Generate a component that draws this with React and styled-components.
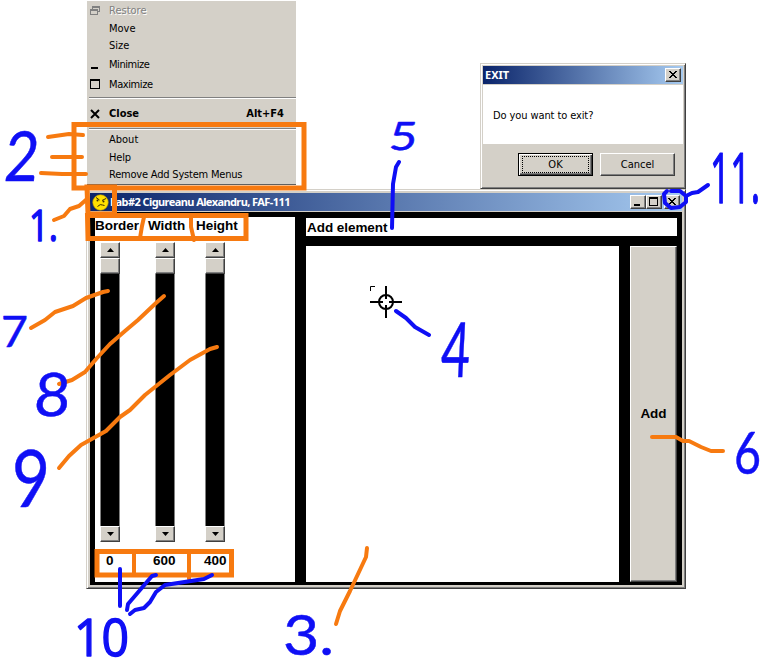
import React from "react";
import styled, { createGlobalStyle } from "styled-components";

const face = "#d4d0c8";
const orange = "#f77a10";
const blue = "#0f0ff5";
const ui = `"DejaVu Sans Condensed", "DejaVu Sans", sans-serif`;

const Global = createGlobalStyle`
  * { box-sizing: border-box; }
  html, body { margin: 0; background: #fff; }
`;

const Desktop = styled.main`
  position: relative;
  width: 761px;
  height: 660px;
  overflow: hidden;
  background: #fff;
  color: #000;
  font: 11px/14px ${ui};
`;

const SystemMenu = styled.ul`
  position: absolute;
  left: 87px;
  top: 1px;
  width: 209px;
  height: 184px;
  margin: 0;
  padding: 0;
  list-style: none;
  background: ${face};
  border-bottom: 1px solid #606060;
`;

const MenuItem = styled.li`
  display: grid;
  grid-template-columns: 22px 1fr auto;
  align-items: center;
  height: ${(p) => p.$h}px;
  padding-right: 12px;
  white-space: nowrap;
  font-weight: ${(p) => (p.$bold ? 700 : 400)};
  letter-spacing: ${(p) => p.$ls || 0}px;
  color: ${(p) => (p.$disabled ? "#808080" : "#000")};
  text-shadow: ${(p) => (p.$disabled ? "1px 1px 0 #fff" : "none")};
`;

const MenuIcon = styled.svg`
  display: block;
  width: 12px;
  height: 12px;
  margin-left: 2px;
`;

const MenuRule = styled.li`
  height: 2px;
  margin: ${(p) => p.$m};
  border-top: 1px solid #808080;
  border-bottom: 1px solid #fff;
`;

const Frame = styled.section`
  position: absolute;
  left: ${(p) => p.$x}px;
  top: ${(p) => p.$y}px;
  width: ${(p) => p.$w}px;
  height: ${(p) => p.$h}px;
  display: flex;
  flex-direction: column;
  padding: ${(p) => p.$pad};
  background: ${face};
  border: 1px solid;
  border-color: ${face} #404040 #404040 ${face};
  box-shadow: inset 1px 1px #fff, inset -1px -1px #808080;
`;

const TitleBar = styled.header`
  display: flex;
  align-items: center;
  flex: none;
  height: 18px;
  padding: 0 2px;
  background: linear-gradient(90deg, #0a246a, #a6caf0);
  color: #fff;
`;

const Title = styled.h1`
  flex: 1;
  margin: 0 0 0 ${(p) => p.$ml || 0}px;
  font: bold 11px/16px "Noto Sans", sans-serif;
  white-space: nowrap;
  letter-spacing: ${(p) => p.$ls || 0}px;
`;

const raised = `
  background: ${face};
  border: 1px solid;
  border-color: #fff #404040 #404040 #fff;
  box-shadow: inset -1px -1px #808080;
`;

const CaptionButton = styled.button`
  ${raised}
  display: block;
  width: 16px;
  height: 14px;
  margin-left: ${(p) => p.$gap || 0}px;
  padding: 0;
`;

const CaptionIcon = styled.svg`
  display: block;
  width: 14px;
  height: 12px;
`;

const DialogBody = styled.p`
  height: 59px;
  margin: 1px 0 0;
  padding: 24px 0 0 10px;
  background: #fff;
  letter-spacing: -0.1px;
`;

const DialogActions = styled.div`
  display: flex;
  justify-content: flex-end;
  gap: 7px;
  padding: 9px 8px 0 0;
`;

const DialogButton = styled.button`
  ${raised}
  width: 75px;
  height: 23px;
  padding: 2px;
  font: 11px/15px ${ui};
  color: #000;
  ${(p) =>
    p.$default &&
    `border-color: #000; box-shadow: inset 1px 1px #fff, inset -1px -1px #404040, inset -2px -2px #808080;`}
`;

const FocusRing = styled.span`
  display: block;
  height: 17px;
  margin: 0 1px;
  border: 1px dotted ${(p) => (p.$on ? "#000" : "transparent")};
`;

const Client = styled.div`
  flex: 1;
  display: grid;
  grid-template-columns: 200px 371px;
  gap: 11px;
  margin-top: 1px;
  padding: 5px 5px 3px;
  background: #000;
  font: bold 13.5px/16px "Liberation Sans", sans-serif;
`;

const Sliders = styled.div`
  display: flex;
  background: #fff;
`;

const Channel = styled.div`
  display: flex;
  flex-direction: column;
  width: ${(p) => p.$w}px;
`;

const ChannelLabel = styled.span`
  height: 25px;
  margin-left: ${(p) => p.$start}px;
  padding-top: 1px;
  white-space: nowrap;
  letter-spacing: -0.05px;
`;

const ChannelValue = styled.span`
  margin-top: 11px;
  padding-left: ${(p) => p.$pad}px;
`;

const ScrollBar = styled.div`
  display: flex;
  flex-direction: column;
  width: 20px;
  height: 300px;
  margin-left: 5px;
  background: #000;
  border: solid #808080;
  border-width: 0 1px;
`;

const ScrollButton = styled.span`
  ${raised}
  display: flex;
  align-items: center;
  justify-content: center;
  height: 16px;
  margin: 0 -1px;
`;

const Arrow = styled.svg`
  display: block;
  width: 7px;
  height: 4px;
  transform: ${(p) => (p.$down ? "rotate(180deg)" : "none")};
`;

const Track = styled.div`
  flex: 1;
`;

const Editor = styled.div`
  display: grid;
  grid-template: 18px 336px / 313px 47px;
  gap: 10px 11px;
  padding-top: 1px;
`;

const Heading = styled.div`
  grid-column: 1 / -1;
  padding-left: 1px;
  background: #fff;
  line-height: 19px;
  letter-spacing: -0.05px;
`;

const Canvas = styled.div`
  background: #fff;
  padding: 40px 0 0 64px;
`;

const Cross = styled.svg`
  display: block;
  width: 33px;
  height: 33px;
`;

const AddButton = styled.button`
  ${raised}
  padding: 0;
  color: #000;
  font: inherit;
`;

const Face = styled.svg`
  display: block;
  width: 17px;
  height: 17px;
`;

const Ink = styled.svg`
  position: absolute;
  inset: 0;
  width: 761px;
  height: 660px;
  pointer-events: none;
  fill: none;
  stroke-linecap: round;
  stroke-linejoin: round;
`;

const Note = styled.text`
  font-family: ${(p) => (p.$plain ? `"Open Sans"` : "Lato")}, sans-serif;
  font-weight: 400;
  fill: ${blue};
  stroke: ${blue};
  stroke-width: ${(p) => (p.$plain ? 1.5 : 0.5)}px;
`;

function CaptionControl({ kind, gap }) {
  return (
    <CaptionButton $gap={gap} aria-label={kind}>
      <CaptionIcon viewBox="0 0 14 12" shapeRendering="crispEdges">
        {kind === "minimize" && <path d="M3 8h6v2H3z" />}
        {kind === "maximize" && <path fillRule="evenodd" d="M2 1h9v9H2zM3 3v6h7V3z" />}
        {kind === "close" && (
          <path d="M3 2h2v1h1v1h2V3h1V2h2v1h-1v1H9v1H8v1h1v1h1v1h1v1H9V8H8V7H6v1H5v1H3V8h1V7h1V6h1V5H5V4H4V3H3z" />
        )}
      </CaptionIcon>
    </CaptionButton>
  );
}

function Slider({ w, label, start, value, valuePad }) {
  return (
    <Channel $w={w}>
      <ChannelLabel $start={start}>{label}</ChannelLabel>
      <ScrollBar>
        <ScrollButton>
          <Arrow viewBox="0 0 7 4"><path d="M0 4L3.5 0L7 4z" /></Arrow>
        </ScrollButton>
        <ScrollButton />
        <Track />
        <ScrollButton>
          <Arrow $down viewBox="0 0 7 4"><path d="M0 4L3.5 0L7 4z" /></Arrow>
        </ScrollButton>
      </ScrollBar>
      <ChannelValue $pad={valuePad}>{value}</ChannelValue>
    </Channel>
  );
}

const notes = [
  { t: "2", x: 3, y: 181, s: 69, w: 34, skew: -5 },
  { t: "1.", x: 29, y: 241, s: 44, w: 29, skew: 0, plain: true },
  { t: "5", x: 388, y: 150, s: 39, w: 28, skew: -6 },
  { t: "4", x: 440, y: 377, s: 76, w: 29, skew: -3 },
  { t: "7", x: 1, y: 347, s: 42, w: 27, skew: 0 },
  { t: "8", x: 33, y: 416, s: 60, w: 36, skew: -4 },
  { t: "9", x: 12, y: 507, s: 79, w: 38, skew: 0 },
  { t: "10", x: 74, y: 656, s: 52, w: 55, skew: 0, plain: true },
  { t: "3.", x: 283, y: 655, s: 56, w: 51, skew: 0 },
  { t: "6", x: 734, y: 474, s: 58, w: 27, skew: 0 },
  { t: "11.", x: 710, y: 203, s: 69, w: 50, skew: 0, plain: true },
];

export default function App() {
  return (
    <Desktop>
      <Global />
      <SystemMenu>
        <MenuItem $h={19} $disabled>
          <MenuIcon viewBox="0 0 12 12" fill="none" stroke="#808080" shapeRendering="crispEdges">
            <path d="M3.500 5V1.500h7v5H9M4 2.500h6M1.500 4.500h7v5h-7zM2 5.500h6" />
          </MenuIcon>
          Restore
        </MenuItem>
        <MenuItem $h={17}><i />Move</MenuItem>
        <MenuItem $h={17}><i />Size</MenuItem>
        <MenuItem $h={21} $ls={-0.45}>
          <MenuIcon viewBox="0 0 12 12" shapeRendering="crispEdges"><path d="M2 8h7v2H2z" /></MenuIcon>
          Minimize
        </MenuItem>
        <MenuItem $h={19} $ls={-0.4}>
          <MenuIcon viewBox="0 0 12 12" shapeRendering="crispEdges"><path fillRule="evenodd" d="M1 0h10v10H1zM2 2v7h8V2z" /></MenuIcon>
          Maximize
        </MenuItem>
        <MenuRule $m="3px 0 0 2px" />
        <MenuItem $h={29} $bold>
          <MenuIcon viewBox="0 0 12 12" fill="none" stroke="#000" strokeWidth="2"><path d="M2 2L10 10M10 2L2 10" /></MenuIcon>
          <span>Close</span>
          <span>Alt+F4</span>
        </MenuItem>
        <MenuRule $m="0 0 1px 2px" />
        <MenuItem $h={18}><i />About</MenuItem>
        <MenuItem $h={17} $ls={-0.2}><i />Help</MenuItem>
        <MenuItem $h={17} $ls={-0.2}><i />Remove Add System Menus</MenuItem>
      </SystemMenu>

      <Frame $x={480} $y={63} $w={206} $h={126} $pad="2px">
        <TitleBar>
          <Title>EXIT</Title>
          <CaptionControl kind="close" />
        </TitleBar>
        <DialogBody>Do you want to exit?</DialogBody>
        <DialogActions>
          <DialogButton $default><FocusRing $on>OK</FocusRing></DialogButton>
          <DialogButton><FocusRing>Cancel</FocusRing></DialogButton>
        </DialogActions>
      </Frame>

      <Frame $x={86} $y={189} $w={600} $h={400} $pad="3px">
        <TitleBar>
          <Face viewBox="0 0 17 17">
            <circle cx="8.5" cy="8.5" r="7.8" fill="#ffe000" stroke="#b18b00" strokeWidth=".6" />
            <path d="M4 3.500l3.500 2.500M14 4.500l-4 2M5.500 12.500q3-3 5-1.500l2 .5" fill="none" stroke="#3c2c00" strokeWidth="1" />
            <circle cx="5.500" cy="6.500" r="1" fill="#3c2c00" />
            <circle cx="11.500" cy="7.500" r="1" fill="#3c2c00" />
          </Face>
          <Title $ml={1} $ls={-0.58}>Lab#2 Cigureanu Alexandru, FAF-111</Title>
          <CaptionControl kind="minimize" />
          <CaptionControl kind="maximize" />
          <CaptionControl kind="close" gap={2} />
        </TitleBar>
        <Client>
          <Sliders>
            <Slider w={55} label="Border" start={0} value="0" valuePad={11} />
            <Slider w={50} label="Width" start={-2} value="600" valuePad={3} />
            <Slider w={50} label="Height" start={-4} value="400" valuePad={4} />
          </Sliders>
          <Editor>
            <Heading>Add element</Heading>
            <Canvas>
              <Cross viewBox="0 0 33 33" fill="none" stroke="#000">
                <path d="M.5 5V.5H5" />
                <circle cx="16" cy="16" r="7" strokeWidth="2" />
                <path strokeWidth="2" d="M0 16h13M19 16h13M16 0v13M16 19v13" />
              </Cross>
            </Canvas>
            <AddButton>Add</AddButton>
          </Editor>
        </Client>
      </Frame>

      <Ink viewBox="0 0 761 660">
        <g stroke={orange} strokeWidth="5" strokeLinejoin="miter">
          <path d="M74 124.500H304V188H74z" />
          <path d="M87 187H114.500V214H88z" />
          <path d="M87.500 215.500H246V238.500H88z" />
          <path d="M97 551.500H231.500V575H97z" />
        </g>
        <g stroke={orange} strokeWidth="4">
          <path d="M144 217l-2 9-2 12M191 217v10l3 13M134 552v22M189 552v27" />
          <path d="M48 137l21-3 14 1M52 157H82M41 173l21 1H86" />
          <path d="M54 220l10-4 6-7 9-3 8-7" />
          <path d="M31 328l14-8 10-8 18-6 13-8 17-6 5-1" />
          <path d="M59 384l13-4 13-8 12-14 13-14 15-13 13-11 18-17 8-7" />
          <path d="M59 468l10-12 12-11 25-14 14-14 10-7 15-15 25-20 20-15 20-11 7-2" />
          <path d="M652 437h24l7 4h6l12 6 10 4h12" />
          <path d="M367 548l-1 9-16 34-10 20-4 13" />
        </g>
        <g stroke={blue} strokeWidth="4">
          <path d="M399 162l-3 5-3 17-1 44M396 311l10 7 9 9 14 8" />
          <path d="M120 569v37M156 575l-4 1-24 28-1 6M212 575l-8 4-39 6-9 7-6 10-6 6-9 2-5 4" />
          <path d="M671 191h9l6 5v6l-6 5-9 1-6-5-1-9 3-3M686 196l6-3 6-1 10-7" />
        </g>
        {notes.map((n) => (
          <Note
            key={n.t}
            $plain={n.plain}
            fontSize={n.s}
            textLength={n.w}
            lengthAdjust="spacingAndGlyphs"
            transform={`translate(${n.x} ${n.y}) skewX(${n.skew})`}
          >
            {n.t}
          </Note>
        ))}
      </Ink>
    </Desktop>
  );
}
